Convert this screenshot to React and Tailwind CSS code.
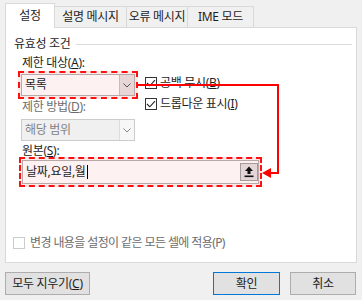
import React from 'react'

function Check({ checked, disabled }) {
  return (
    <span className={disabled
      ? 'w-[12px] h-[12px] shrink-0 border border-[#cccccc] bg-white flex items-center justify-center'
      : 'w-[12px] h-[12px] shrink-0 border border-[#333333] bg-white flex items-center justify-center'}>
      {checked && (
        <svg width="10" height="8" viewBox="0 0 10 8">
          <path d="M1 4 L3.8 6.8 L9 1.2" fill="none" stroke="#222" strokeWidth="1.1" />
        </svg>
      )}
    </span>
  )
}

function Chevron({ color = '#555' }) {
  return (
    <svg width="8" height="5" viewBox="0 0 8 5">
      <path d="M0.5 0.5 L4 4 L7.5 0.5" fill="none" stroke={color} strokeWidth="1" />
    </svg>
  )
}

function UploadIcon() {
  return (
    <svg width="10" height="12" viewBox="0 0 10 12">
      <path d="M5 0.5 L9 5 L6.5 5 L6.5 8 L3.5 8 L3.5 5 L1 5 Z" fill="#111" />
      <rect x="0.5" y="9.5" width="9" height="1.6" fill="#111" />
    </svg>
  )
}

export default function App() {
  return (
    <div className="relative w-[362px] h-[300px] overflow-hidden bg-[#f0f0f0] text-[12px] tracking-[-0.3px] text-[#1e1e1e] font-['Noto_Sans','Noto_Sans_CJK_KR',sans-serif]">
      {/* tabs */}
      <div className="h-[27px] flex items-start pt-[3px] px-[5px]">
        <div className="relative z-10 h-[25px] w-[50px] bg-white border border-b-0 border-[#d9d9d9] flex items-center justify-center pb-[1px]">설정</div>
        <div className="mt-[3px] h-[21px] w-[72px] border-t border-r border-[#d9d9d9] flex items-center justify-center">설명 메시지</div>
        <div className="mt-[3px] h-[21px] w-[61px] border-t border-r border-[#d9d9d9] flex items-center justify-center">오류 메시지</div>
        <div className="mt-[3px] h-[21px] w-[66px] border-t border-r border-[#d9d9d9] flex items-center justify-center">IME 모드</div>
      </div>

      {/* panel */}
      <div className="mx-[5px] w-[352px] h-[236px] bg-white border border-[#d9d9d9] flex flex-col">
        <div className="mt-[8px] h-[16px] pl-[8px] flex items-center">
          <span className="leading-[16px]">유효성 조건</span>
          <div className="flex-1 h-px bg-[#dcdcdc] ml-[5px] mr-[4px]" />
        </div>

        <div className="mt-[3px] h-[16px] leading-[16px] pl-[16px]">제한 대상(<span className="underline">A</span>):</div>

        <div className="flex items-start">
          <div className="ml-[12px] flex flex-col">
            <div className="w-[120px] h-[28px] border-2 border-dashed border-[#ff1010] bg-[#fde8e8] p-[1px]">
              <div className="h-[22px] border border-[#b9a8a8] bg-[#fdf1f1] flex">
                <div className="flex-1 pl-[3px] flex items-center">목록</div>
                <div className="w-[15px] bg-[#e7d6d6] border-l border-[#c9b8b8] flex items-center justify-center">
                  <Chevron />
                </div>
              </div>
            </div>
            <div className="h-[16px] leading-[16px] pl-[4px] text-[#6d6d6d]">제한 방법(<span className="underline">D</span>):</div>
            <div className="mt-[4px] ml-[3px] w-[114px] h-[22px] border border-[#cccccc] bg-[#f0f0f0] flex">
              <div className="flex-1 pl-[3px] flex items-center text-[#838383]">해당 범위</div>
              <div className="w-[15px] bg-[#f7f7f7] border-l border-[#dddddd] flex items-center justify-center">
                <Chevron color="#888" />
              </div>
            </div>
          </div>

          <div className="ml-[7px] mt-[4px] flex flex-col gap-[5px]">
            <div className="h-[16px] flex items-center gap-[3px]">
              <Check checked />
              <span>공백 무시(<span className="underline">B</span>)</span>
            </div>
            <div className="h-[16px] flex items-center gap-[3px]">
              <Check checked />
              <span>드롭다운 표시(<span className="underline">I</span>)</span>
            </div>
          </div>
        </div>

        <div className="mt-[4px] h-[12px] leading-[12px] pl-[16px]">원본(<span className="underline">S</span>):</div>

        <div className="ml-[13px] w-[243px] h-[30px] border-2 border-dashed border-[#ff1010] bg-[#fde8e8] p-[1px]">
          <div className="h-[24px] border border-[#b9a8a8] bg-[#fdf1f1] flex items-center">
            <div className="flex-1 pl-[3px] flex items-center">
              <span>날짜,요일,월</span>
              <span className="ml-px w-px h-[14px] bg-black" />
            </div>
            <div className="w-[18px] h-[18px] border border-[#a59a9a] bg-[#e4d6d6] flex items-center justify-center">
              <UploadIcon />
            </div>
          </div>
        </div>

        <div className="mt-[48px] h-[16px] pl-[7px] flex items-center gap-[5px] text-[#6d6d6d]">
          <Check disabled />
          <span className="tracking-[-0.6px]">변경 내용을 설정이 같은 모든 셀에 적용(P)</span>
        </div>
      </div>

      {/* buttons */}
      <div className="mt-[9px] flex">
        <button className="ml-[5px] w-[85px] h-[23px] bg-[#e1e1e1] border border-[#adadad] flex items-center justify-center">
          모두 지우기(<span className="underline">C</span>)
        </button>
        <div className="ml-auto mr-[6px] flex gap-[10px]">
          <button className="w-[67px] h-[23px] bg-[#e1e1e1] border border-[#0078d7] flex items-center justify-center">확인</button>
          <button className="w-[66px] h-[23px] bg-[#e1e1e1] border border-[#adadad] flex items-center justify-center">취소</button>
        </div>
      </div>

      {/* red annotation arrow */}
      <svg className="absolute inset-0 pointer-events-none" width="362" height="300" viewBox="0 0 362 300">
        <path d="M138 85 L278 85 L278 173 L270 173" fill="none" stroke="#ff0000" strokeWidth="2" />
        <polygon points="262,173 271,168 271,178" fill="#ff0000" />
      </svg>
    </div>
  )
}
